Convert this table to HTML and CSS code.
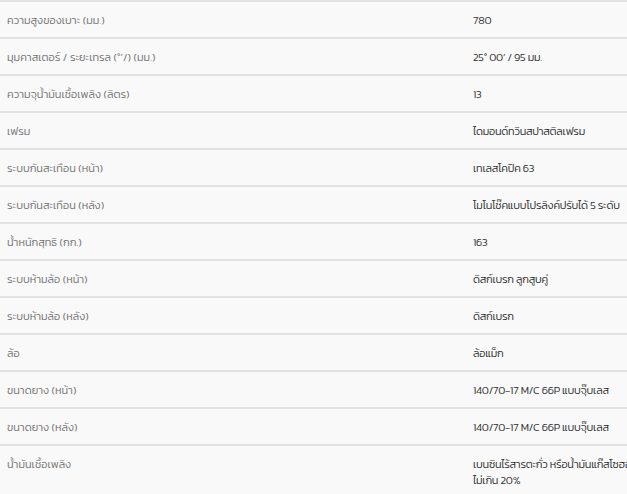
FILE: index.html
```html
<!DOCTYPE html>
<html lang="th">
<head>
<meta charset="utf-8">
<link rel="stylesheet" href="styles.css">
</head>
<body>
<table class="spec">
<tbody>
<tr><td class="k">ความสูงของเบาะ (มม.)</td><td class="v">780</td></tr>
<tr><td class="k">มุมคาสเตอร์ / ระยะเทรล (°’/) (มม.)</td><td class="v">25° 00’ / 95 มม.</td></tr>
<tr><td class="k">ความจุน้ำมันเชื้อเพลิง (ลิตร)</td><td class="v">13</td></tr>
<tr><td class="k">เฟรม</td><td class="v">ไดมอนด์ทวินสปาสติลเฟรม</td></tr>
<tr><td class="k">ระบบกันสะเทือน (หน้า)</td><td class="v">เทเลสโคปิค 63</td></tr>
<tr><td class="k">ระบบกันสะเทือน (หลัง)</td><td class="v">โมโนโช๊คแบบโปรลิงค์ปรับได้ 5 ระดับ</td></tr>
<tr><td class="k">น้ำหนักสุทธิ (กก.)</td><td class="v">163</td></tr>
<tr><td class="k">ระบบห้ามล้อ (หน้า)</td><td class="v">ดิสก์เบรก ลูกสูบคู่</td></tr>
<tr><td class="k">ระบบห้ามล้อ (หลัง)</td><td class="v">ดิสก์เบรก</td></tr>
<tr><td class="k">ล้อ</td><td class="v">ล้อแม็ก</td></tr>
<tr><td class="k">ขนาดยาง (หน้า)</td><td class="v">140/70-17 M/C 66P แบบจุ๊บเลส</td></tr>
<tr><td class="k">ขนาดยาง (หลัง)</td><td class="v">140/70-17 M/C 66P แบบจุ๊บเลส</td></tr>
<tr><td class="k">น้ำมันเชื้อเพลิง</td><td class="v">เบนซินไร้สารตะกั่ว หรือน้ำมันแก๊สโซฮอล์<br>ไม่เกิน 20%</td></tr>
</tbody>
</table>
</body>
</html>
```
FILE: styles.css
```css
html, body {
  margin: 0;
  padding: 0;
  background: #f9f9f9;
  overflow: hidden;
}
.spec {
  border-collapse: collapse;
  width: 720px;
  font-family: "Kanit", "Noto Sans Thai", "Noto Sans", sans-serif;
  font-weight: 300;
  font-size: 11px;
  line-height: 16px;
}
.spec td {
  border-top: 2px solid #e2e2e2;
  padding: 10px 7px 9px;
  vertical-align: top;
  white-space: nowrap;
}
.spec .k {
  width: 452px;
  color: #737373;
}
.spec .v {
  color: #2f2f2f;
  letter-spacing: -0.25px;
}
```
